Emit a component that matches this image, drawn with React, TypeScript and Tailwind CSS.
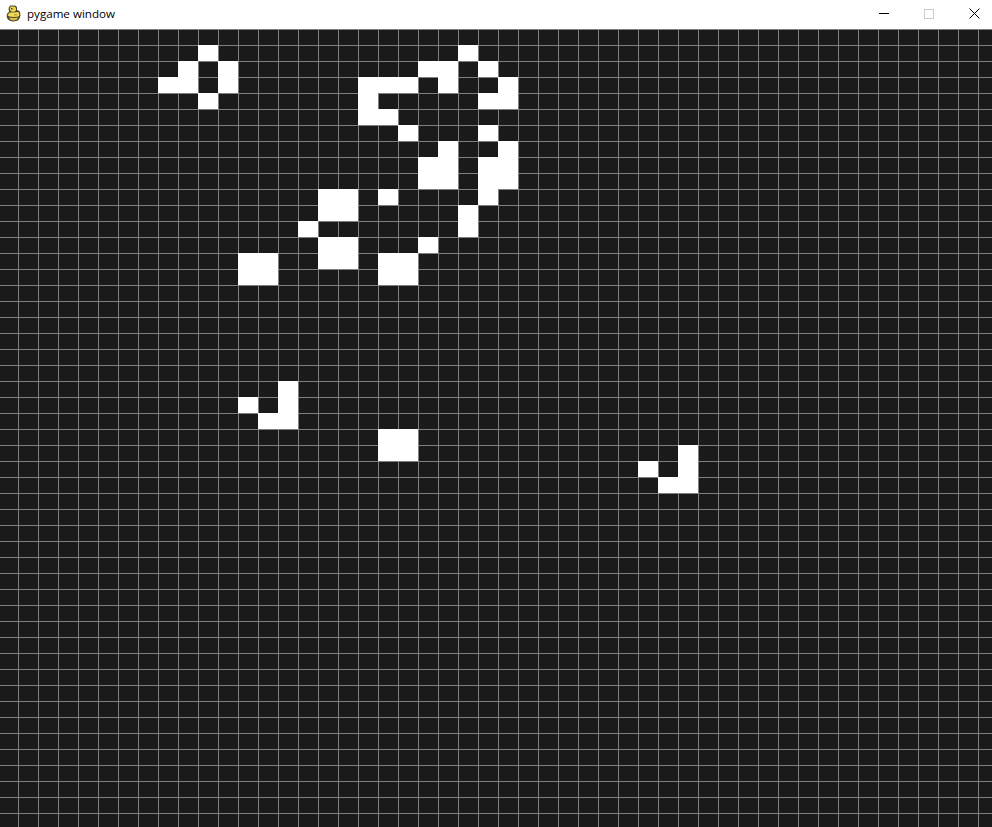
const COLS = 50;
const ROWS = 50;

// live cells, one row per line: [row, ...columns]
const LIVE: [number, ...number[]][] = [
  [1, 10, 23],
  [2, 9, 11, 21, 22, 24],
  [3, 8, 9, 11, 18, 19, 20, 22, 25],
  [4, 10, 18, 24, 25],
  [5, 18, 19],
  [6, 20, 24],
  [7, 22, 25],
  [8, 21, 22, 24, 25],
  [9, 21, 22, 24, 25],
  [10, 16, 17, 19, 24],
  [11, 16, 17, 23],
  [12, 15, 23],
  [13, 16, 17, 21],
  [14, 12, 13, 16, 17, 19, 20],
  [15, 12, 13, 19, 20],
  [22, 14],
  [23, 12, 14],
  [24, 13, 14],
  [25, 19, 20],
  [26, 19, 20, 34],
  [27, 32, 34],
  [28, 33, 34],
];

const live = new Set<string>();
LIVE.forEach(([row, ...cols]) => cols.forEach((col) => live.add(`${row}:${col}`)));

function PygameIcon() {
  return (
    <svg width="15" height="17" viewBox="0 0 15 17" className="shrink-0">
      <path
        d="M4 0.5 L9 0.5 L11 2 L11 5 L13.5 6 L14.5 9 L14 12.5 L12 15.5 L8 16.5 L4 16 L1.5 14 L0.5 11 L1.5 8 L3 7 L2.5 3 Z"
        fill="#4a4630"
      />
      <path d="M4.5 1.5 L8.5 1.5 L10 3 L10 5.5 L8 7 L5 6.5 L3.5 4 Z" fill="#e8d04a" />
      <path d="M3.5 7.5 L8 7.5 L12.5 7 L13.5 9.5 L12.5 11.5 L8 12 L3.5 11.5 L1.5 10.5 Z" fill="#f2dc55" />
      <path d="M3 12.5 L8 13 L12 12.5 L11 14.5 L8 15.5 L4.5 15 Z" fill="#d8bf42" />
      <rect x="5" y="3" width="1.5" height="1.5" fill="#4a4630" />
      <rect x="8" y="9" width="3" height="1.5" fill="#b8a23c" />
    </svg>
  );
}

function TitleBar() {
  return (
    <div className="flex h-[29px] items-center overflow-hidden bg-white pl-[6px] pb-[2px]">
      <PygameIcon />
      <span className="ml-[6px] font-['Open_Sans','Noto_Sans',sans-serif] text-[11.6px] text-black">pygame window</span>
      <div className="ml-auto -mr-[5px] flex">
        <button className="flex h-[27px] w-[45px] items-center justify-center">
          <span className="h-px w-[10px] bg-black" />
        </button>
        <button className="flex h-[27px] w-[45px] items-center justify-center">
          <span className="size-[10px] border border-[#cccccc]" />
        </button>
        <button className="flex h-[27px] w-[46px] items-center justify-center">
          <svg width="11" height="11" viewBox="0 0 11 11">
            <path d="M0.5 0.5 L10.5 10.5 M10.5 0.5 L0.5 10.5" stroke="#000" strokeWidth="1" fill="none" />
          </svg>
        </button>
      </div>
    </div>
  );
}

export default function App() {
  const cells = [];
  for (let row = 0; row < ROWS; row++) {
    for (let col = 0; col < COLS; col++) {
      const on = live.has(`${row}:${col}`);
      cells.push(
        <div
          key={`${row}:${col}`}
          className={on ? "bg-white" : "border-t border-l border-[#808080] bg-[#1a1a1a]"}
        />,
      );
    }
  }

  return (
    <div className="h-[827px] w-[992px] overflow-hidden bg-[#1a1a1a]">
      <TitleBar />
      <div className="-ml-[2px] grid grid-cols-[repeat(50,20px)] grid-rows-[repeat(50,16px)]">{cells}</div>
    </div>
  );
}
